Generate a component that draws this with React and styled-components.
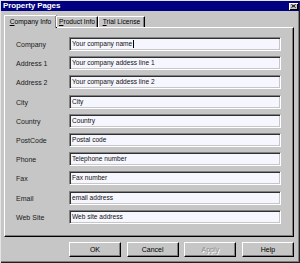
import React from "react";
import styled, { createGlobalStyle } from "styled-components";

const Global = createGlobalStyle`
  html, body { margin: 0; padding: 0; background: #c0c0c0; }
  body { font-family: "Liberation Sans", Arial, sans-serif; }
`;

const Window = styled.div`
  width: 300px;
  height: 263px;
  box-sizing: border-box;
  background: #c6c6c6;
  padding: 1px;
  display: flex;
  flex-direction: column;
  box-shadow: inset 1px 1px 0 #e4e4e4, inset -1px -1px 0 #202020, inset -2px -2px 0 #808080;
`;

const TitleBar = styled.div`
  height: 10px;
  background: #000080;
  display: flex;
  align-items: center;
  justify-content: space-between;
  padding: 0 1px 0 2px;
`;

const Title = styled.span`
  color: #fff;
  font-weight: bold;
  font-size: 8px;
  line-height: 10px;
  letter-spacing: -0.1px;
`;

const CloseBtn = styled.div`
  width: 9px;
  height: 7px;
  background: #c6c6c6;
  box-sizing: border-box;
  box-shadow: inset 1px 1px 0 #fff, inset -1px -1px 0 #000;
  display: flex;
  align-items: center;
  justify-content: center;
`;

const Body = styled.div`
  display: flex;
  flex-direction: column;
  padding: 4px 5px 0 3px;
`;

const TabRow = styled.div`
  display: flex;
  align-items: flex-end;
  padding-left: 2px;
  height: 13px;
  margin-bottom: -1px;
  position: relative;
  z-index: 1;
`;

const Tab = styled.div`
  box-sizing: border-box;
  height: ${(p) => (p.$active ? "13px" : "11px")};
  margin: ${(p) => (p.$active ? "0 -1px 0 -2px" : "0 0 1px 0")};
  padding: 0;
  background: #c6c6c6;
  border-top: 1px solid #fff;
  border-left: 1px solid #fff;
  border-right: 1px solid #000;
  box-shadow: inset -1px 0 0 #808080;
  border-radius: 1px 1px 0 0;
  font-size: 6.7px;
  line-height: ${(p) => (p.$active ? "11px" : "10px")};
  color: #000;
  white-space: nowrap;
  overflow: hidden;
  width: ${(p) => p.$w}px;
  text-align: center;
  & u { text-decoration: underline; text-underline-offset: 1px; }
`;

const Panel = styled.div`
  height: 210px;
  box-sizing: border-box;
  border-top: 1px solid #fff;
  border-left: 1px solid #fff;
  border-right: 1px solid #000;
  border-bottom: 1px solid #000;
  box-shadow: inset -1px -1px 0 #808080;
  padding: 9px 12px 0 11px;
`;

const Form = styled.div`
  display: grid;
  grid-template-columns: 53px 212px;
  grid-auto-rows: 14px;
  row-gap: 5.2px;
  align-items: center;
`;

const Label = styled.div`
  font-size: 7px;
  color: #1a1a1a;
  padding-top: 1px;
`;

const Field = styled.div`
  height: 14px;
  box-sizing: border-box;
  background: #f6f6fe;
  border-top: 1px solid #808080;
  border-left: 1px solid #808080;
  border-right: 1px solid #fff;
  border-bottom: 1px solid #fff;
  box-shadow: inset 1px 1px 0 #303030, inset -1px -1px 0 #c6c6c6;
  font-size: 6.6px;
  line-height: 12px;
  padding-left: 2px;
  color: #111;
  white-space: nowrap;
  overflow: hidden;
  display: flex;
  align-items: center;
`;

const Caret = styled.span`
  display: inline-block;
  width: 1px;
  height: 8px;
  background: #000;
  margin-left: 0.5px;
`;

const ButtonRow = styled.div`
  display: flex;
  justify-content: flex-end;
  gap: 5.7px;
  margin-top: 5px;
`;

const Button = styled.div`
  width: 52px;
  height: 15px;
  box-sizing: border-box;
  background: #c6c6c6;
  border-top: 1px solid #fff;
  border-left: 1px solid #fff;
  border-right: 1px solid #000;
  border-bottom: 1px solid #000;
  box-shadow: inset -1px -1px 0 #808080;
  font-size: 7px;
  display: flex;
  align-items: center;
  justify-content: center;
  color: ${(p) => (p.$disabled ? "#8a8a8a" : "#000")};
  text-shadow: ${(p) => (p.$disabled ? "1px 1px 0 #fff" : "none")};
`;

const fields = [
  ["Company", "Your company name", true],
  ["Address 1", "Your company addess line 1"],
  ["Address 2", "Your company addess line 2"],
  ["City", "City"],
  ["Country", "Country"],
  ["PostCode", "Postal code"],
  ["Phone", "Telephone number"],
  ["Fax", "Fax number"],
  ["Email", "email address"],
  ["Web Site", "Web site address"],
];

export default function App() {
  return (
    <>
      <Global />
      <Window>
        <TitleBar>
          <Title>Property Pages</Title>
          <CloseBtn>
            <svg width="5" height="4" viewBox="0 0 5 4">
              <path d="M0.5 0.5 L4.5 3.5 M4.5 0.5 L0.5 3.5" stroke="#000" strokeWidth="1" />
            </svg>
          </CloseBtn>
        </TitleBar>
        <Body>
          <TabRow>
            <Tab $active $w={53}><u>C</u>ompany Info</Tab>
            <Tab $w={42}><u>P</u>roduct Info</Tab>
            <Tab $w={47}><u>T</u>rial License</Tab>
          </TabRow>
          <Panel>
            <Form>
              {fields.map(([l, v, caret]) => (
                <React.Fragment key={l}>
                  <Label>{l}</Label>
                  <Field>
                    {v}
                    {caret && <Caret />}
                  </Field>
                </React.Fragment>
              ))}
            </Form>
          </Panel>
          <ButtonRow>
            <Button>OK</Button>
            <Button>Cancel</Button>
            <Button $disabled>Apply</Button>
            <Button>Help</Button>
          </ButtonRow>
        </Body>
      </Window>
    </>
  );
}
